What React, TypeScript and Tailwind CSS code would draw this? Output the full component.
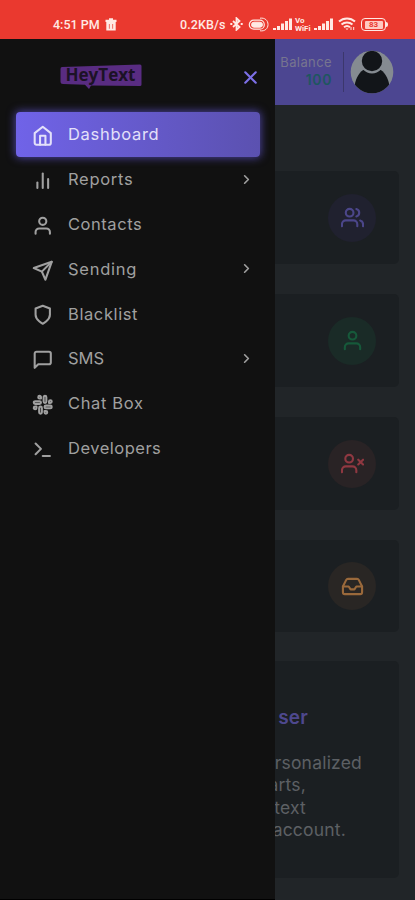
import React from "react";
import {
    FiBarChart2,
    FiChevronRight,
    FiHome,
    FiInbox,
    FiMessageSquare,
    FiSend,
    FiShield,
    FiSlack,
    FiTerminal,
    FiUser,
    FiUsers,
    FiUserX,
    FiX,
} from "react-icons/fi";

const navItems = [
    { label: "Dashboard", icon: FiHome, active: true, tracking: "tracking-[0.7px]" },
    { label: "Reports", icon: FiBarChart2, arrow: true, tracking: "tracking-[0.7px]" },
    { label: "Contacts", icon: FiUser, tracking: "tracking-[0.55px]" },
    { label: "Sending", icon: FiSend, arrow: true, tracking: "tracking-[0.75px]" },
    { label: "Blacklist", icon: FiShield, tracking: "tracking-[0.6px]" },
    { label: "SMS", icon: FiMessageSquare, arrow: true, tracking: "tracking-[0px]" },
    { label: "Chat Box", icon: FiSlack, tracking: "tracking-[0.65px]" },
    { label: "Developers", icon: FiTerminal, tracking: "tracking-[0.5px]" },
];

const stats = [
    { icon: FiUsers, card: "h-[93px]", circle: "bg-[#20212f] text-[#4b4689]" },
    { icon: FiUser, card: "mt-[30px] h-[93px]", circle: "bg-[#1a2b27] text-[#16593a]" },
    { icon: FiUserX, card: "mt-[30px] h-[93px]", circle: "bg-[#292325] text-[#8f3841]" },
    { icon: FiInbox, card: "mt-[30px] h-[92px]", circle: "bg-[#292624] text-[#9a693b]" },
];

const Signal = () => (
    <svg width="20" height="12" viewBox="0 0 20 12" fill="#ffe9e4">
        <rect x="0" y="10" width="3" height="2" />
        <rect x="4" y="8" width="3" height="4" />
        <rect x="8" y="5.5" width="3" height="6.5" />
        <rect x="12" y="3" width="3" height="9" />
        <rect x="16" y="0.5" width="3" height="11.5" />
    </svg>
);

const StatusBar = () => (
    <div className="flex h-[39px] items-end bg-[#ea392f] pb-[6px] pl-[53px] font-['Roboto',sans-serif] text-[12.5px] font-medium text-[#ffe9e4]">
        <span className="w-[52px] whitespace-nowrap leading-[17px]">4:51 PM</span>
        <svg className="mb-[2px]" width="12" height="13" viewBox="0 0 12 13" fill="#ffe9e4">
            <path d="M0.5 1.7H4V0.3H8V1.7H11.5V4H0.5Z" />
            <path fillRule="evenodd" d="M1.3 4H10.7V12.6H1.3ZM3.9 6V10.8H4.6V6ZM7.4 6V10.8H8.1V6Z" />
        </svg>
        <span className="ml-[63px] w-[49px] whitespace-nowrap leading-[17px] tracking-[0.1px]">0.2KB/s</span>
        <svg className="mb-[2px] ml-[1px]" width="13" height="14" viewBox="0 0 13 14" fill="none" stroke="#ffe9e4" strokeWidth="1.8">
            <path d="M3 4L9.5 10L6.5 12.8V1.2L9.5 4L3 10" />
            <path d="M0.3 7H2.3M10.7 7H12.7" strokeWidth="2.2" />
        </svg>
        <svg className="mb-[1px] ml-[5px]" width="21" height="15" viewBox="0 0 21 15" fill="none" stroke="#ffe9e4">
            <rect x="1.3" y="3.2" width="15" height="9" rx="4.5" strokeWidth="1.2" />
            <rect x="3.5" y="5.2" width="11" height="5" rx="2.5" fill="#ffe9e4" />
            <path d="M12 1.2C17 0.5 20 3.5 20 7.5S17 14.5 12 13.8" strokeWidth="1" />
        </svg>
        <div className="mb-[3px] ml-[4px]"><Signal /></div>
        <div className="mb-[1px] ml-[2px] w-[17px] text-[8px] font-bold leading-[7.5px]">
            <div>Vo</div>
            <div>WiFi</div>
        </div>
        <div className="mb-[3px] ml-[2px]"><Signal /></div>
        <svg className="mb-[2px] ml-[4px]" width="18" height="14" viewBox="0 0 18 14" fill="none" stroke="#ffe9e4" strokeWidth="2">
            <path d="M1 4.5C5.5 0.4 12.5 0.4 17 4.5M3.5 7.5C6.7 4.7 11.3 4.7 14.5 7.5M6 10.2C7.8 8.7 10.2 8.7 12 10.2" />
            <path d="M7.5 11.5L9 13L10.5 11.5Z" fill="#ffe9e4" stroke="none" />
            <path d="M13 10V13M15.7 10V13" strokeWidth="1" />
        </svg>
        <div className="mb-[2px] ml-[5px] flex items-center">
            <div className="flex h-[13px] w-[25px] items-center justify-center rounded-[4px] border-[1.5px] border-[#ffe9e4]">
                <span className="flex h-[8px] w-[18px] items-center justify-center rounded-[1px] bg-[#ffc9c1] text-[8px] font-bold text-[#ea392f]">83</span>
            </div>
            <div className="h-[5px] w-[2px] rounded-r bg-[#ffe9e4]" />
        </div>
    </div>
);

const Logo = () => (
    <svg width="82" height="26" viewBox="0 0 82 26">
        <path d="M2 3L80 0.5Q81.5 0.5 81.5 2V20.5Q81.5 22 80 22L31 21.5L29 25L25 20.8L3 20Q0.5 20 0.5 17.5V5Q0.5 3 2 3Z" fill="#592c82" />
        <text x="5.5" y="17.3" textLength="70" lengthAdjust="spacingAndGlyphs" fontFamily="Open Sans, sans-serif" fontSize="17" fontWeight="700" fill="#1c1226">
            HeyText
        </text>
    </svg>
);

const Drawer = () => (
    <aside className="w-[275px] shrink-0 border-b border-black bg-[#111111]">
        <div className="flex h-[73px] items-start justify-between pl-[60px] pr-[14px] pt-[25px]">
            <Logo />
            <FiX className="mt-[3px] h-[21px] w-[21px] text-[#7d70e8]" strokeWidth={2.4} />
        </div>
        <nav className="flex flex-col pl-4 pr-[15px]">
            {navItems.map(({ label, icon: Icon, active, arrow, tracking }) => (
                <div
                    key={label}
                    className={`flex h-[44.8px] items-center rounded-[4px] pl-4 pr-[6px] ${
                        active
                            ? "bg-linear-to-r from-[#7063e8] to-[#5b51b0] text-[#e3e0fa] shadow-[0_0_9px_1px_rgba(103,90,225,0.65)]"
                            : "text-[#a0a0a0]"
                    }`}
                >
                    <Icon className="mt-[3px] h-[21.5px] w-[21.5px]" strokeWidth={2.3} />
                    <span className={`ml-[14.5px] grow text-[16.5px] leading-[24px] ${tracking}`}>{label}</span>
                    {arrow && <FiChevronRight className="h-[15px] w-[15px]" strokeWidth={2.6} />}
                </div>
            ))}
        </nav>
    </aside>
);

const Header = () => (
    <header className="flex h-[66px] items-start bg-[#4c4691]">
        <div className="mt-[14px] w-[57px] text-right leading-[18px]">
            <div className="text-[13px] tracking-[0.4px] text-[#77758f]">Balance</div>
            <div className="text-[14px] font-semibold tracking-[0.6px] text-[#1e5660]">100</div>
        </div>
        <div className="ml-[11px] mt-[13px] h-[40px] w-px bg-[#3b376c]" />
        <svg className="ml-[6px] mt-[11px]" width="44" height="44" viewBox="0 0 44 44">
            <clipPath id="avatar">
                <circle cx="22" cy="22" r="21.3" />
            </clipPath>
            <g clipPath="url(#avatar)">
                <rect width="44" height="44" fill="#858b91" />
                <path d="M4.5 36C6 27 10 21 15 19H29C34 21 38 27 39.5 36L32 44H12Z" fill="#121519" />
                <circle cx="22" cy="11" r="11.3" fill="#121519" stroke="#858b91" strokeWidth="2.2" />
            </g>
        </svg>
    </header>
);

const WelcomeCard = () => (
    <div className="mt-[29px] h-[217px] rounded-r-[5px] bg-[#1b1f22] pt-[44px]">
        <div className="flex w-[33px] justify-end whitespace-nowrap text-[19px] font-semibold leading-[26px] tracking-[0.2px] text-[#4e488e]">ser</div>
        <div className="mt-[21px] text-[17.5px] leading-[22.3px] tracking-[0.2px] text-[#5d6064]">
            <div className="flex w-[87px] justify-end whitespace-nowrap">rsonalized</div>
            <div className="flex w-[31px] justify-end whitespace-nowrap">arts,</div>
            <div className="flex w-[31px] justify-end whitespace-nowrap">text</div>
            <div className="flex w-[71px] justify-end whitespace-nowrap">account.</div>
        </div>
    </div>
);

const App: React.FC = () => (
    <div className="h-[900px] w-[415px] overflow-hidden bg-[#212528] font-['Inter',sans-serif]">
        <StatusBar />
        <div className="flex h-[861px]">
            <Drawer />
            <main className="w-[140px] overflow-hidden">
                <Header />
                <div className="mt-[66px] pr-4">
                    {stats.map(({ icon: Icon, card, circle }, i) => (
                        <div key={i} className={`flex items-center justify-end rounded-r-[5px] bg-[#1b1f22] pr-[23px] ${card}`}>
                            <div className={`flex h-12 w-12 items-center justify-center rounded-full ${circle}`}>
                                <Icon className="h-[23px] w-[23px]" strokeWidth={2.2} />
                            </div>
                        </div>
                    ))}
                    <WelcomeCard />
                </div>
            </main>
        </div>
    </div>
);

export default App;
